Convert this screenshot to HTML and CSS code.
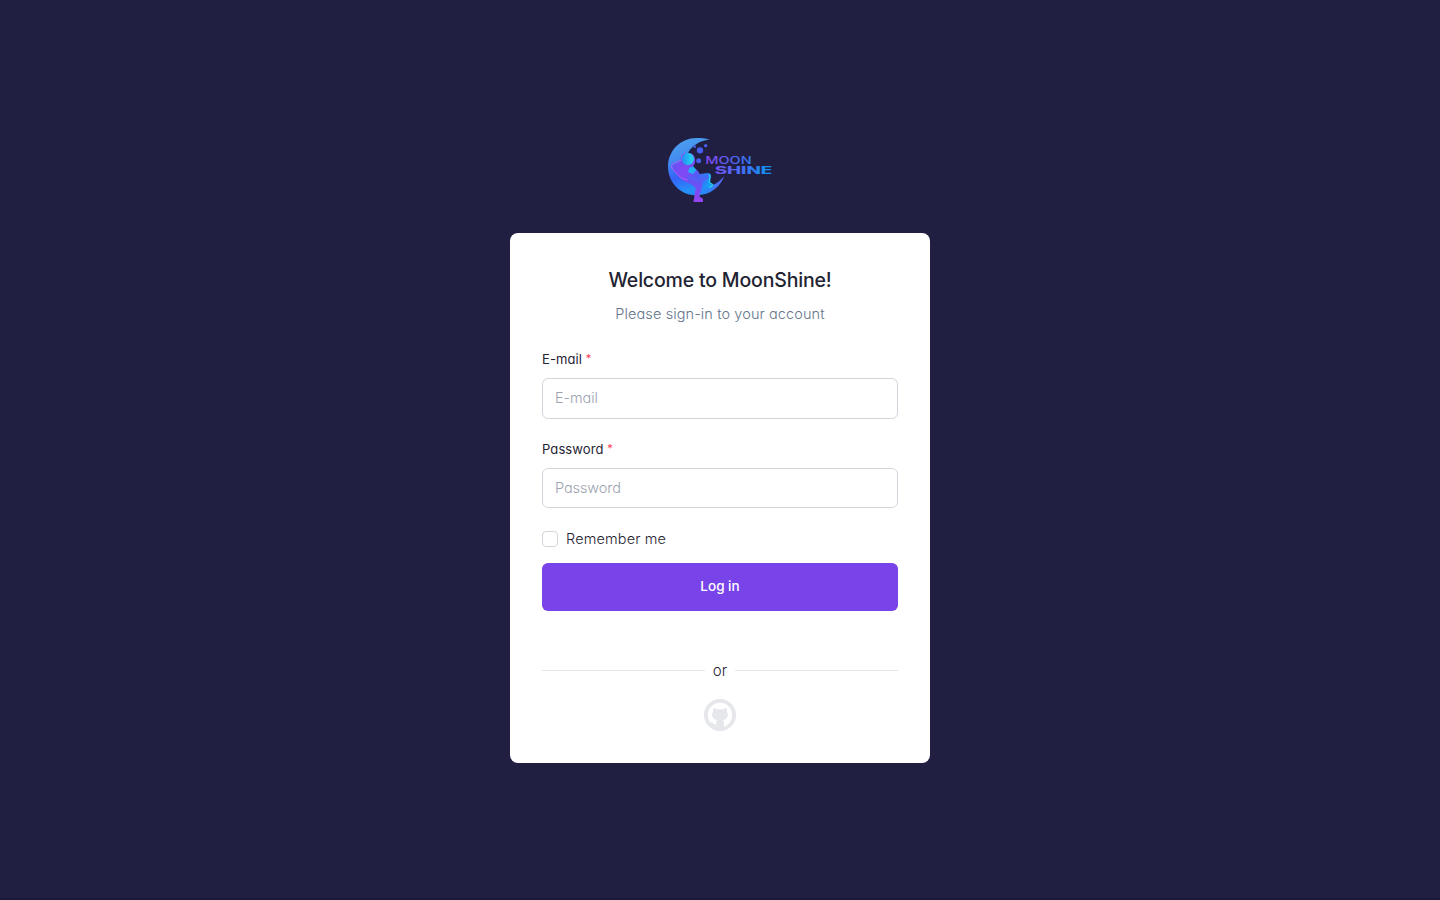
FILE: index.html
```html
<!DOCTYPE html>
<html lang="en">
<head>
<meta charset="utf-8">
<title>MoonShine</title>
<link rel="stylesheet" href="styles.css">
</head>
<body>
<main class="login">
  <svg class="logo" viewBox="24 24 312 192" role="img" aria-label="MoonShine">
    <defs>
      <linearGradient id="moon" x1="0.3" y1="0" x2="0.6" y2="1"><stop offset="0" stop-color="#4ba0ee"/><stop offset=".3" stop-color="#438bf0"/><stop offset=".6" stop-color="#3563f8"/><stop offset=".85" stop-color="#2690f8"/><stop offset="1" stop-color="#2b86f6"/></linearGradient>
      <linearGradient id="tip" gradientUnits="userSpaceOnUse" x1="130" y1="0" x2="192" y2="0"><stop offset="0" stop-color="#2f7bf6" stop-opacity="0"/><stop offset="1" stop-color="#6f55f0"/></linearGradient>
      <linearGradient id="body" gradientUnits="userSpaceOnUse" x1="42" y1="90" x2="155" y2="150"><stop offset="0" stop-color="#684ff4"/><stop offset=".35" stop-color="#8149f3"/><stop offset=".62" stop-color="#5a57f5"/><stop offset=".8" stop-color="#3274f7"/><stop offset="1" stop-color="#189ef5"/></linearGradient>
      <linearGradient id="leg" gradientUnits="userSpaceOnUse" x1="128" y1="135" x2="105" y2="210"><stop offset="0" stop-color="#3e70f6"/><stop offset=".4" stop-color="#6951f4"/><stop offset="1" stop-color="#9444f0"/></linearGradient>
      <linearGradient id="visor" x1="0" y1="0" x2="1" y2="0"><stop offset="0" stop-color="#2388f5"/><stop offset="1" stop-color="#25ddea"/></linearGradient>
      <linearGradient id="word" gradientUnits="userSpaceOnUse" x1="138" y1="0" x2="315" y2="0"><stop offset="0" stop-color="#8548ed"/><stop offset=".5" stop-color="#5067f3"/><stop offset="1" stop-color="#168df4"/></linearGradient>
    </defs>
    <path fill="url(#moon)" d="M149 29C135 24 123 24 110 24C62 24 24 62 24 110C24 158 62 196 110 196C151 196 181 169 192 139C177 159 156 171 132 168C97 165 74 138 75 101C76 64 107 31 149 29Z"/>
    <path fill="url(#tip)" d="M110 196C151 196 181 169 192 139C177 159 156 171 132 168Z"/>
    <path fill="url(#body)" d="M63 84C67 66 92 64 101 76C109 88 106 104 98 109L114 123L119 132L143 129C149 129 154 133 153 139L150 158L159 164L151 174L127 173L119 178L96 164C78 158 65 150 56 138C49 130 38 118 37 106Q48 102 61 94Z"/>
    <path fill="url(#leg)" d="M82 140C97 137 107 145 119 142L143 133C150 135 151 140 146 145L127 159C126 178 119 189 119 200L129 206V216H100L103 202L107 174L92 160Z"/>
    <path class="limb" d="M63 91C51 97 39 99 35 105C32 117 45 123 51 132C57 142 71 149 84 150"/>
    <path class="limb helmet" d="M66 91Q61 75 75 68"/>
    <circle cx="83" cy="87" r="18.5" fill="url(#visor)"/>
    <path fill="#24aef3" d="M88 114L100 109L109 121L98 133L84 126Z"/>
    <path class="boot" d="M148 133C153 140 145 150 149 158L158 163L156 169L148 171"/>
    <g class="bubbles"><circle cx="120" cy="61" r="9.5"/><circle cx="104" cy="50" r="4"/><circle cx="137" cy="47" r="5"/><circle cx="116" cy="92" r="7.5"/></g>
    <g fill="url(#word)">
      <text class="word-moon" x="136" y="102" textLength="139" lengthAdjust="spacingAndGlyphs">MOON</text>
      <text class="word-shine" x="164" y="132" textLength="173" lengthAdjust="spacingAndGlyphs">SHINE</text>
    </g>
  </svg>
  <section class="card">
    <h1 class="title">Welcome to MoonShine!</h1>
    <p class="subtitle">Please sign-in to your account</p>
    <form class="form">
      <label class="label label-email" for="email">E-mail <span class="required">*</span></label>
      <input class="input input-email" id="email" type="email" placeholder="E-mail">
      <label class="label label-password" for="password">Password <span class="required">*</span></label>
      <input class="input input-password" id="password" type="password" placeholder="Password">
      <label class="remember"><input class="checkbox" type="checkbox"><span>Remember me</span></label>
      <button class="submit" type="button">Log in</button>
    </form>
    <div class="divider"><span>or</span></div>
    <a class="github" aria-label="GitHub">
      <svg width="32" height="32" viewBox="0 0 32 32"><circle cx="16" cy="16" r="14.1" fill="none" stroke="#e5e7eb" stroke-width="3.8"/><path fill="#e5e7eb" d="M9.3 9.2C11 9 12.5 9.8 13.4 10.5Q16 9.8 18.6 10.5C19.5 9.8 21 9 22.7 9.2Q23.3 11 22.8 12.5C25.4 16.3 23.3 20.5 18.9 21Q20 22 20 24V30H12V27C9 27.7 8 26 7.5 24.8Q7 23.8 6.4 23.2C8.4 22.6 8.8 24.2 9.8 25.1Q10.8 25.7 12.1 25.2Q12.2 22 13.1 21C8.7 20.5 6.6 16.3 9.2 12.5Q8.7 11 9.3 9.2Z"/></svg>
    </a>
  </section>
</main>
</body>
</html>
```
FILE: styles.css
```css
*{box-sizing:border-box}
body{margin:0;background:#201f42;color:#1f2433;font-family:Inter,"Open Sans",sans-serif;font-feature-settings:"cv11","ss03"}
.login{height:900px;display:flex;flex-direction:column;align-items:center;padding-top:138px;border-bottom:2px solid #1e1838}
.logo{display:block;width:104px;height:64px;flex:none;margin-bottom:31px}
.limb{fill:none;stroke:#b55cf4;stroke-width:3}
.helmet{stroke:#9a55f4}
.boot{fill:none;stroke:#2bdfed;stroke-width:3}
.bubbles{fill:#485ff0}
.word-moon{font:500 32px Inter,sans-serif}
.word-shine{font:800 29px Inter,sans-serif}
.card{width:420px;height:530px;background:#fff;border-radius:8px;padding:32px;flex:none}
.title{margin:0;text-align:center;font-size:19.5px;line-height:31px;font-weight:500;letter-spacing:-.18px}
.subtitle{margin:6px 0 0;text-align:center;font-size:14.5px;line-height:24px;font-weight:300;letter-spacing:.1px;color:#64748b}
.form{display:flex;flex-direction:column}
.label{height:20px;font-size:13px;line-height:20px;letter-spacing:.1px;color:#1f2433}
.label-email{margin-top:23px}
.label-password{margin-top:20px}
.required{color:#ff3b4f;font-size:11px;line-height:1;vertical-align:2px}
.input{width:100%;height:41px;margin:9px 0 0;padding:0 12px 2px;border:1px solid #d1d5db;border-radius:6px;background:#fff;font:300 14.5px Inter,sans-serif;font-feature-settings:"cv11";letter-spacing:-.1px}
.input-password{height:40px;padding-bottom:1px}
.input::placeholder{color:#9ca3af;opacity:1}
.remember{display:flex;align-items:center;gap:8px;height:24px;margin-top:19px;font-size:14.5px;font-weight:350;letter-spacing:.14px}
.remember span{padding-bottom:1px}
.checkbox{appearance:none;width:16px;height:16px;margin:0;border:1px solid #d1d5db;border-radius:4px;background:#fff}
.submit{height:48px;margin-top:12px;padding:0 0 2px;border:0;border-radius:6px;background:#7843e9;color:#fff;font:500 13.5px Inter,sans-serif;letter-spacing:0}
.divider{display:flex;align-items:center;gap:8px;height:24px;margin-top:47px;font-size:15px;font-weight:350}
.divider::before,.divider::after{content:"";height:1px;flex:1;background:#e5e7eb}
.divider span{padding-top:1px}
.github{display:flex;justify-content:center;margin-top:17px}
```
